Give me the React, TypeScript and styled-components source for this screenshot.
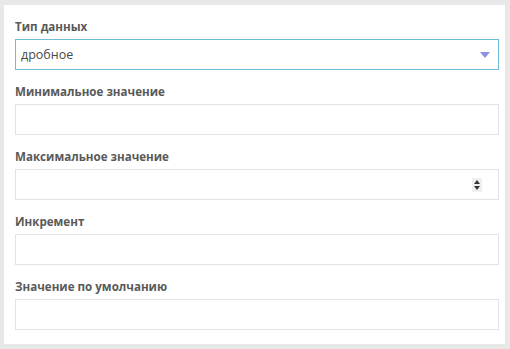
import React from 'react'
import styled, { createGlobalStyle } from 'styled-components'

const GlobalStyle = createGlobalStyle`
  html, body {
    margin: 0;
    padding: 0;
    background: #e8e8e8;
  }
  body {
    font-family: 'Open Sans', 'Liberation Sans', sans-serif;
  }
`

const Page = styled.div`
  width: 510px;
  height: 349px;
  padding: 5px 5px 5px 4px;
  box-sizing: border-box;
`

const Panel = styled.div`
  background: #fff;
  height: 339px;
  box-sizing: border-box;
  padding: 10px 6px 0 11px;
  display: flex;
  flex-direction: column;
  gap: 10px;
`

const Field = styled.div`
  display: flex;
  flex-direction: column;
`

const Label = styled.label`
  font-size: 11.6px;
  font-weight: 700;
  color: #595959;
  height: 24px;
  line-height: 24px;
`

const Box = styled.div<{ $active?: boolean }>`
  height: 31px;
  box-sizing: border-box;
  border: 1px solid ${(p) => (p.$active ? '#6fbcd6' : '#e3e3e3')};
  display: flex;
  align-items: center;
  padding: 0 6px 0 5px;
  font-size: 12.5px;
  color: #4a4a4a;
`

const Value = styled.span`
  flex: 1;
`

const Caret = styled.span`
  width: 0;
  height: 0;
  border-left: 5px solid transparent;
  border-right: 5px solid transparent;
  border-top: 6px solid #8c90e2;
  margin-right: 2px;
`

const Spinner = styled.span`
  width: 10px;
  height: 14px;
  background: #efefef;
  margin-right: 10px;
  display: flex;
  flex-direction: column;
  align-items: center;
  justify-content: center;
  gap: 2px;
`

const Tri = styled.span<{ $up?: boolean }>`
  width: 0;
  height: 0;
  border-left: 3.5px solid transparent;
  border-right: 3.5px solid transparent;
  ${(p) =>
    p.$up ? 'border-bottom: 4px solid #333;' : 'border-top: 4px solid #333;'}
`

export default function App() {
  return (
    <Page>
      <GlobalStyle />
      <Panel>
        <Field>
          <Label>Тип данных</Label>
          <Box $active>
            <Value>дробное</Value>
            <Caret />
          </Box>
        </Field>
        <Field>
          <Label>Минимальное значение</Label>
          <Box />
        </Field>
        <Field>
          <Label>Максимальное значение</Label>
          <Box>
            <Value />
            <Spinner>
              <Tri $up />
              <Tri />
            </Spinner>
          </Box>
        </Field>
        <Field>
          <Label>Инкремент</Label>
          <Box />
        </Field>
        <Field>
          <Label>Значение по умолчанию</Label>
          <Box />
        </Field>
      </Panel>
    </Page>
  )
}
